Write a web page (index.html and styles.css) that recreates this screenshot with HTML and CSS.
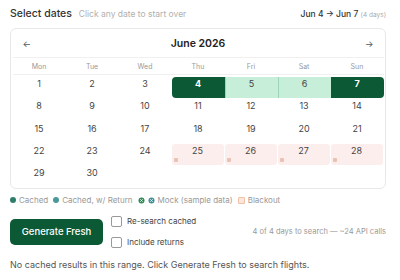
FILE: index.html
```html
<!DOCTYPE html>
<html lang="en">
<head>
    <meta charset="UTF-8">
    <title>Select dates</title>
    <link rel="stylesheet" href="styles.css">
</head>
<body>
    <div class="page">
        <!-- header -->
        <div class="top">
            <div class="title">Select dates <span class="hint">Click any date to start over</span></div>
            <div class="range">Jun 4 → Jun 7 <span class="days">(4 days)</span></div>
        </div>

        <!-- calendar -->
        <div class="card">
            <div class="nav">
                <span class="arrow">←</span>
                <span class="month">June 2026</span>
                <span class="arrow">→</span>
            </div>
            <div class="weekdays">
                <span>Mon</span><span>Tue</span><span>Wed</span><span>Thu</span><span>Fri</span><span>Sat</span><span>Sun</span>
            </div>
            <div class="grid">
                <div class="day">1</div>
                <div class="day">2</div>
                <div class="day">3</div>
                <div class="day sel start">4</div>
                <div class="day inrange">5</div>
                <div class="day inrange">6</div>
                <div class="day sel end">7</div>

                <div class="day">8</div>
                <div class="day">9</div>
                <div class="day">10</div>
                <div class="day">11</div>
                <div class="day">12</div>
                <div class="day">13</div>
                <div class="day">14</div>

                <div class="day">15</div>
                <div class="day">16</div>
                <div class="day">17</div>
                <div class="day">18</div>
                <div class="day">19</div>
                <div class="day">20</div>
                <div class="day">21</div>

                <div class="day">22</div>
                <div class="day">23</div>
                <div class="day">24</div>
                <div class="day blackout">25<i class="mark"></i></div>
                <div class="day blackout">26<i class="mark"></i></div>
                <div class="day blackout">27<i class="mark"></i></div>
                <div class="day blackout">28<i class="mark"></i></div>

                <div class="day">29</div>
                <div class="day">30</div>
            </div>
        </div>

        <!-- legend -->
        <div class="legend">
            <span class="item"><i class="dot cached"></i>Cached</span>
            <span class="item"><i class="dot ret"></i>Cached, w/ Return</span>
            <span class="item">
                <svg class="mock" viewBox="0 0 10 10"><circle cx="5" cy="5" r="4.3" fill="#2f8a55"/><path d="M3.3 3.3l3.4 3.4M6.7 3.3l-3.4 3.4" stroke="#fff" stroke-width="1.3"/></svg>
                <svg class="mock" viewBox="0 0 10 10"><circle cx="5" cy="5" r="4.3" fill="#3f8f95"/><path d="M3.3 3.3l3.4 3.4M6.7 3.3l-3.4 3.4" stroke="#fff" stroke-width="1.3"/></svg>
                Mock (sample data)
            </span>
            <span class="item"><i class="sq"></i>Blackout</span>
        </div>

        <!-- actions -->
        <div class="actions">
            <button class="btn">Generate Fresh</button>
            <div class="checks">
                <label class="check"><span class="box"></span>Re-search cached</label>
                <label class="check"><span class="box"></span>Include returns</label>
            </div>
            <div class="calls">4 of 4 days to search — ~24 API calls</div>
        </div>

        <p class="empty">No cached results in this range. Click Generate Fresh to search flights.</p>
    </div>
</body>
</html>
```

FILE: styles.css
```css
body {
    margin: 0;
    font-family: Inter, "Noto Sans", sans-serif;
    color: #333;
    background: #fff;
}

.page {
    width: 376px;
    padding: 7px 0 0 10px;
}

/* header */
.top {
    display: flex;
    justify-content: space-between;
    align-items: baseline;
    height: 16px;
    margin-bottom: 5px;
}

.title {
    font-size: 10.5px;
    font-weight: 500;
    color: #333;
}

.hint {
    font-size: 8.5px;
    font-weight: 400;
    color: #b0b0b0;
    margin-left: 4px;
}

.range {
    font-size: 8.5px;
    font-weight: 500;
    color: #333;
}

.days {
    font-size: 6.5px;
    font-weight: 400;
    color: #aaa;
}

/* calendar */
.card {
    border: 1px solid #e8e8e8;
    border-radius: 6px;
    padding: 0 1.5px 1px;
}

.nav {
    display: flex;
    justify-content: space-between;
    align-items: center;
    height: 28px;
    padding: 0 10px;
    border-bottom: 1px solid #f0f0f0;
}

.arrow {
    font-size: 9px;
    color: #555;
}

.month {
    font-size: 10.5px;
    font-weight: 600;
    color: #222;
}

.weekdays {
    display: grid;
    grid-template-columns: repeat(7, 1fr);
    height: 16px;
    align-items: center;
    border-bottom: 1px solid #f0f0f0;
    font-size: 7px;
    color: #999;
    text-align: center;
}

.grid {
    display: grid;
    grid-template-columns: repeat(7, 1fr);
    grid-auto-rows: 21px;
    row-gap: 1.3px;
    padding-top: 2px;
}

.day {
    position: relative;
    text-align: center;
    font-size: 9px;
    line-height: 14px;
    color: #444;
}

.sel {
    background: #0b5a35;
    color: #fff;
    font-weight: 700;
}

.start {
    border-radius: 4px 0 0 4px;
}

.end {
    border-radius: 0 4px 4px 0;
}

.inrange {
    background: #c7eed9;
    border-left: 1px solid #9fd3b8;
}

.blackout {
    background: #fdeeee;
    border-radius: 3px;
    margin-right: 1px;
}

.mark {
    position: absolute;
    left: 2px;
    bottom: 3px;
    width: 4px;
    height: 4px;
    border-radius: 1px;
    background: #e8c2b4;
}

/* legend */
.legend {
    display: flex;
    align-items: center;
    gap: 5px;
    margin-top: 6px;
    font-size: 8px;
    color: #999;
    height: 10px;
}

.item {
    display: flex;
    align-items: center;
    gap: 3px;
}

.dot {
    width: 6px;
    height: 6px;
    border-radius: 50%;
}

.cached {
    background: #2f7d6b;
}

.ret {
    background: #4a9898;
}

.mock {
    width: 7px;
    height: 7px;
}

.sq {
    width: 5px;
    height: 5px;
    border: 1px solid #f0c0a8;
    background: #fde6dc;
    border-radius: 1px;
}

/* actions */
.actions {
    display: flex;
    align-items: center;
    margin-top: 10px;
}

.btn {
    width: 93px;
    height: 26px;
    border: none;
    border-radius: 5px;
    background: #0b5a35;
    color: #fff;
    font-family: inherit;
    font-size: 9.5px;
    font-weight: 500;
}

.checks {
    display: flex;
    flex-direction: column;
    gap: 9px;
    margin-left: 8px;
}

.check {
    display: flex;
    align-items: center;
    gap: 5px;
    height: 12px;
    font-size: 8px;
    color: #444;
}

.box {
    width: 9px;
    height: 9px;
    border: 1px solid #999;
    border-radius: 2px;
    background: #fff;
}

.calls {
    margin-left: auto;
    font-size: 7.5px;
    color: #999;
}

.empty {
    margin: 11px 0 0;
    font-size: 9px;
    line-height: 12px;
    color: #555;
}
```
